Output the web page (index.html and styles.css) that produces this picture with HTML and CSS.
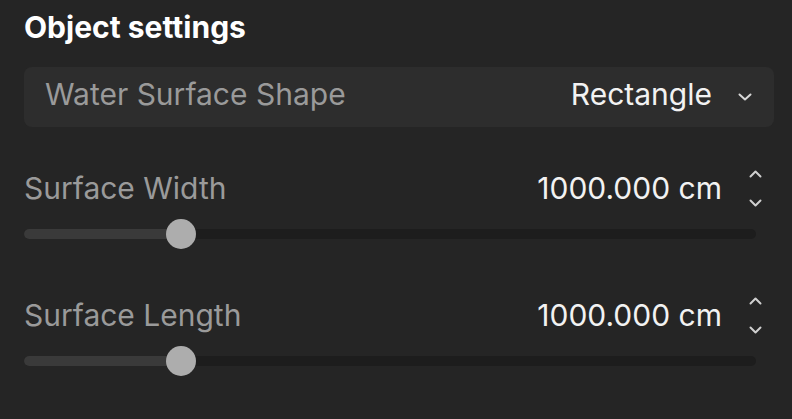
FILE: index.html
```html
<!DOCTYPE html>
<html lang="en">
<head>
    <meta charset="UTF-8">
    <meta name="viewport" content="width=device-width, initial-scale=1.0">
    <title>Object settings</title>
    <link rel="stylesheet" href="styles.css">
</head>
<body>

    <div class="panel">
        <h2 class="panel-title">Object settings</h2>

        <div class="select-row">
            <span class="select-label">Water Surface Shape</span>
            <span class="select-value">Rectangle</span>
            <svg class="chevron" width="14" height="8" viewBox="0 0 14 8">
                <path d="M1.5 1.5 L7 6.5 L12.5 1.5" fill="none" stroke="#d8d8d8" stroke-width="2" stroke-linecap="round" stroke-linejoin="round"/>
            </svg>
        </div>

        <div class="field">
            <div class="field-head">
                <span class="field-label">Surface Width</span>
                <span class="field-value">1000.000 cm</span>
                <div class="spinner">
                    <svg width="13" height="8" viewBox="0 0 13 8"><path d="M1.5 6.5 L6.5 1.5 L11.5 6.5" fill="none" stroke="#cfcfcf" stroke-width="2" stroke-linecap="round" stroke-linejoin="round"/></svg>
                    <svg width="13" height="8" viewBox="0 0 13 8"><path d="M1.5 1.5 L6.5 6.5 L11.5 1.5" fill="none" stroke="#cfcfcf" stroke-width="2" stroke-linecap="round" stroke-linejoin="round"/></svg>
                </div>
            </div>
            <div class="slider">
                <div class="slider-fill" style="width: 21.5%"></div>
                <div class="slider-thumb" style="left: 21.5%"></div>
            </div>
        </div>

        <div class="field">
            <div class="field-head">
                <span class="field-label">Surface Length</span>
                <span class="field-value">1000.000 cm</span>
                <div class="spinner">
                    <svg width="13" height="8" viewBox="0 0 13 8"><path d="M1.5 6.5 L6.5 1.5 L11.5 6.5" fill="none" stroke="#cfcfcf" stroke-width="2" stroke-linecap="round" stroke-linejoin="round"/></svg>
                    <svg width="13" height="8" viewBox="0 0 13 8"><path d="M1.5 1.5 L6.5 6.5 L11.5 1.5" fill="none" stroke="#cfcfcf" stroke-width="2" stroke-linecap="round" stroke-linejoin="round"/></svg>
                </div>
            </div>
            <div class="slider">
                <div class="slider-fill" style="width: 21.5%"></div>
                <div class="slider-thumb" style="left: 21.5%"></div>
            </div>
        </div>
    </div>

</body>
</html>
```

FILE: styles.css
```css
/* Panel */
body {
    margin: 0;
    background-color: #252525;
    font-family: Inter, "Noto Sans", sans-serif;
    color: #f2f2f2;
}

.panel {
    padding: 9px 18px 53px 24px;
}

.panel-title {
    margin: 0;
    font-size: 30px;
    font-weight: 700;
    color: #ffffff;
    line-height: 36px;
}

/* Dropdown */
.select-row {
    display: flex;
    align-items: center;
    box-sizing: border-box;
    height: 60px;
    margin-top: 22px;
    padding: 0 22px 6px 21px;
    background-color: #2d2d2d;
    border-radius: 8px;
}

.select-label {
    flex-grow: 1;
    font-size: 30px;
    color: #9a9a9a;
}

.select-value {
    font-size: 30px;
    color: #f2f2f2;
}

.chevron {
    margin: 6px 0 0 26px;
}

/* Number fields */
.field {
    padding-right: 18px;
    margin-top: 52px;
}

.select-row + .field {
    margin-top: 37px;
}

.field-head {
    display: flex;
    align-items: center;
    height: 48px;
}

.field-label {
    flex-grow: 1;
    font-size: 30px;
    color: #9a9a9a;
}

.field-value {
    font-size: 30px;
    color: #f2f2f2;
}

.spinner {
    display: flex;
    flex-direction: column;
    gap: 21px;
    margin-left: 27px;
    margin-right: -6px;
}

.spinner svg {
    display: block;
}

/* Slider */
.slider {
    position: relative;
    height: 10px;
    margin-top: 17px;
    border-radius: 5px;
    background-color: #1d1d1d;
}

.slider-fill {
    height: 100%;
    border-radius: 5px 0 0 5px;
    background-color: #3a3a3a;
}

.slider-thumb {
    position: absolute;
    top: 50%;
    width: 30px;
    height: 30px;
    margin: -15px 0 0 -15px;
    border-radius: 50%;
    background-color: #adadad;
}
```
